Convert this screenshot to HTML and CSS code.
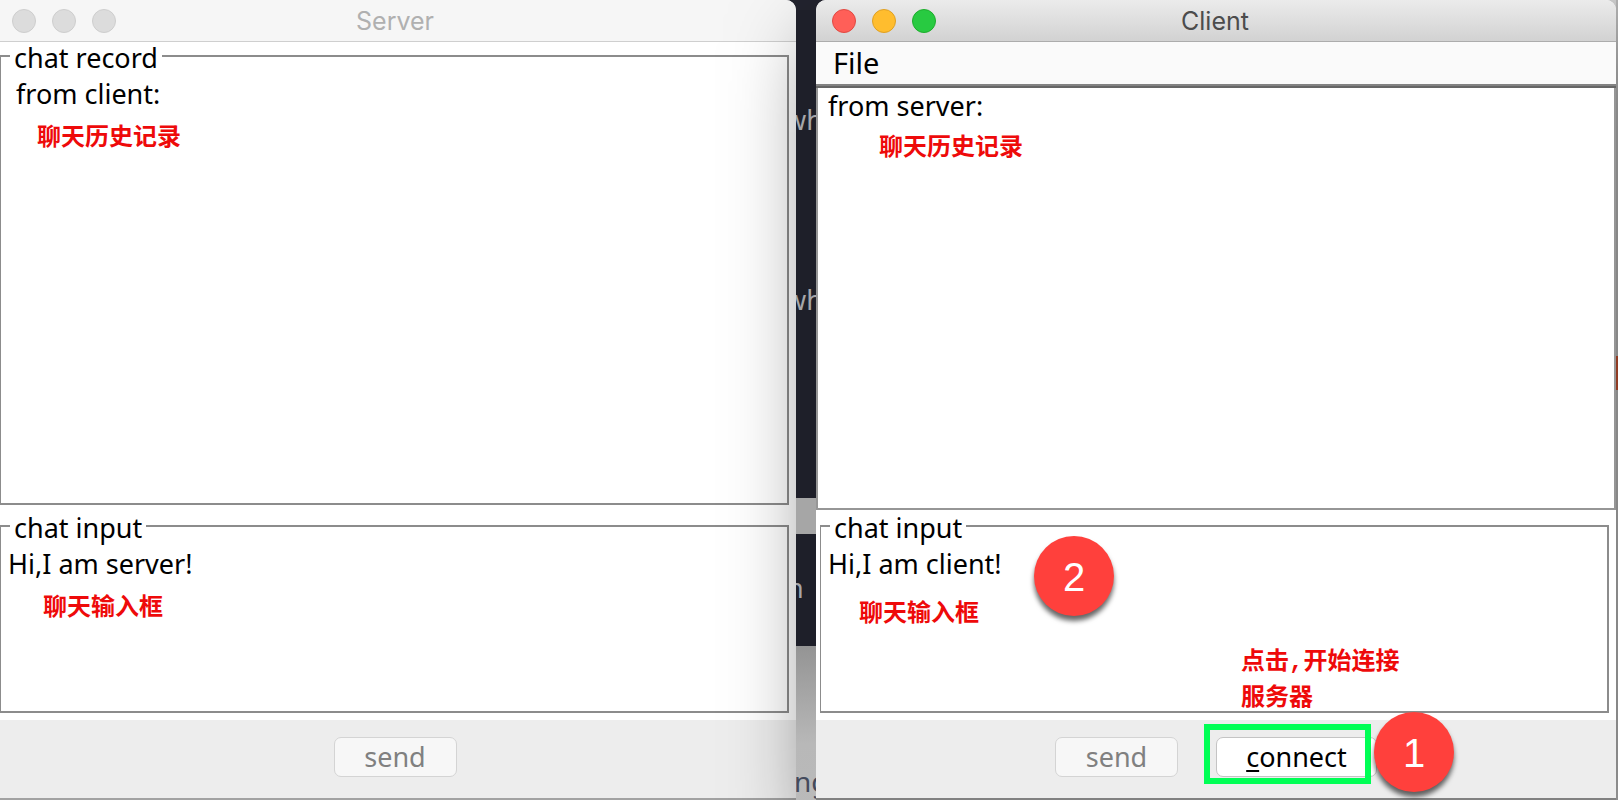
FILE: index.html
```html
<!DOCTYPE html>
<html lang="en">
<head>
<meta charset="utf-8">
<title>Chat</title>
<link rel="stylesheet" href="styles.css">
</head>
<body>
<main class="desktop">
  <section class="window window-server">
    <header class="titlebar">
      <div class="lights"><button class="light" aria-label="Close"></button><button class="light" aria-label="Minimize"></button><button class="light" aria-label="Zoom"></button></div>
      <h1 class="title">Server</h1>
    </header>
    <div class="content">
      <fieldset class="group group-record">
        <legend>chat record</legend>
        <textarea class="area area-indent" aria-label="chat record" readonly>from client:</textarea>
      </fieldset>
      <fieldset class="group group-input">
        <legend>chat input</legend>
        <textarea class="area" aria-label="chat input">Hi,I am server!</textarea>
      </fieldset>
    </div>
    <footer class="actions"><button class="btn" disabled>send</button></footer>
    <p class="note note-server-record">聊天历史记录</p>
    <p class="note note-server-input">聊天输入框</p>
  </section>

  <aside class="behind">
    <div class="pane pane-code"><p>wh</p><p>wh</p></div>
    <div class="pane pane-bar"></div>
    <div class="pane pane-term"><p>n</p></div>
    <div class="pane pane-page"><p>ng</p></div>
  </aside>

  <section class="window window-client">
    <header class="titlebar titlebar-active">
      <div class="lights"><button class="light light-close" aria-label="Close"></button><button class="light light-min" aria-label="Minimize"></button><button class="light light-zoom" aria-label="Zoom"></button></div>
      <h1 class="title">Client</h1>
    </header>
    <nav class="menubar"><button class="menu">File</button></nav>
    <div class="content">
      <div class="scroll">
        <textarea class="area" aria-label="chat record" readonly>from server:</textarea>
      </div>
      <fieldset class="group group-input">
        <legend>chat input</legend>
        <textarea class="area" aria-label="chat input">Hi,I am client!</textarea>
      </fieldset>
    </div>
    <footer class="actions">
      <button class="btn" disabled>send</button>
      <div class="target">
        <button class="btn btn-connect"><u>c</u>onnect</button>
        <span class="frame"></span>
        <span class="badge badge-one">1</span>
        <p class="note note-connect">点击,开始连接<br>服务器</p>
      </div>
    </footer>
    <p class="note note-client-record">聊天历史记录</p>
    <p class="note note-client-input">聊天输入框</p>
    <span class="badge badge-two">2</span>
  </section>
  <div class="edge"><span></span></div>
</main>
</body>
</html>
```

FILE: styles.css
```css
* { box-sizing: border-box; }

body {
  margin: 0;
  font: 27px/36px "Noto Sans", sans-serif;
  color: #000;
}

p, h1 { margin: 0; }
button, textarea { font: inherit; color: inherit; }

.desktop {
  display: grid;
  grid-template-columns: 796fr 20px 800fr 2px;
  min-height: 100vh;
  overflow: hidden;
  background: linear-gradient(90deg, #23242f 60%, #cfcfcf 60%);
}

.window {
  position: relative;
  display: flex;
  flex-direction: column;
  background: #fff;
  border-bottom: 2px solid #a2a2a2;
}
.window-server { border-radius: 0 10px 0 0; }
.window-client {
  z-index: 1;
  border-radius: 10px 10px 0 0;
  border-bottom-color: #818181;
  box-shadow: 0 40px 84px rgba(0, 0, 0, 0.5);
}

.titlebar {
  display: grid;
  grid-template-columns: 1fr auto 1fr;
  align-items: center;
  height: 42px;
  padding: 0 18px 0 16px;
  background: #f6f6f6;
  border-bottom: 1px solid #cfcfcf;
  border-radius: inherit;
}
.window-server .titlebar { padding: 0 18px 0 12px; }
.titlebar-active {
  background: linear-gradient(#ebebeb, #d2d2d2);
  border-bottom-color: #acacac;
  border-radius: 10px 10px 0 0;
}
.title {
  font: 400 25px/40px Inter, sans-serif;
  color: #b0b0b0;
}
.titlebar-active .title { color: #4c4c4c; }

.lights { display: flex; gap: 16px; }
.light {
  width: 24px;
  height: 24px;
  padding: 0;
  border: 1px solid #cecece;
  border-radius: 50%;
  background: #dcdcdc;
}
.light-close { background: #ff5f58; border-color: #e14942; }
.light-min { background: #ffbd2e; border-color: #dfa023; }
.light-zoom { background: #28ca41; border-color: #1dad2c; }

.menubar {
  height: 46px;
  background: #fafafa;
  border-bottom: 2px solid #666;
  box-shadow: inset 0 -2px #828282;
}
.menu {
  height: 42px;
  padding: 0 17px;
  border: 0;
  background: none;
  font-size: 29px;
}

.content {
  flex: 1;
  display: flex;
  flex-direction: column;
  gap: 7px;
  padding: 0 7px 7px 0;
}
.window-client .content { gap: 2px; padding: 0 0 7px; }

.group {
  display: flex;
  min-width: 0;
  margin: 0;
  padding: 6px 0 0;
  border: 2px solid #8c8c8c;
  border-left-width: 1px;
}
.group legend {
  margin-left: 9px;
  padding: 4px 4px 0;
  line-height: 24px;
}
.group-record { flex: 1; }
.group-input { height: 201px; }
.window-client .group-input { margin: 0 7px 0 4px; }

.scroll {
  flex: 1;
  display: flex;
  border: 2px solid #969696;
  border-top: 0;
}

.area {
  flex: 1;
  min-width: 0;
  padding: 0 7px;
  border: 0;
  outline: 0;
  resize: none;
  background: transparent;
}
.area-indent { padding-left: 15px; }
.scroll .area { padding: 0 10px; }

.actions {
  display: flex;
  justify-content: center;
  align-items: center;
  gap: 38px;
  height: 78px;
  padding-bottom: 4px;
  background: #ededed;
}
.window-server .actions { padding-right: 6px; }

.btn {
  width: 123px;
  height: 40px;
  padding: 0;
  border: 1px solid #c4c4c4;
  border-radius: 7px;
  background: #fff;
  line-height: 36px;
}
.btn:disabled { background: #f7f7f7; border-color: #d4d4d4; color: #808080; }
.btn-connect { display: block; width: 161px; }
.btn-connect u { text-decoration-thickness: 2px; text-underline-offset: 3px; }

/* Annotations laid over the windows */
.target { position: relative; }
.frame {
  position: absolute;
  inset: -13px 6px -7px -12px;
  border: 6px solid #00ff55;
  pointer-events: none;
}
.note {
  position: absolute;
  font: 700 24px/36px "Liberation Mono", "Noto Sans CJK SC", monospace;
  color: #ee0a0a;
  white-space: nowrap;
}
.note-server-record { left: 37px; top: 121px; }
.note-server-input { left: 43px; bottom: 171px; }
.note-client-record { left: 63px; top: 131px; }
.note-client-input { left: 43px; bottom: 165px; }
.note-connect { left: 25px; bottom: 60px; }

.badge {
  position: absolute;
  width: 80px;
  height: 80px;
  border-radius: 50%;
  background: #ff403c;
  box-shadow: 0 5px 5px rgba(0, 0, 0, 0.6);
  color: #fff;
  font: 40px/82px "Liberation Sans", Arial, sans-serif;
  text-align: center;
}
.badge-one { left: 158px; top: -25px; }
.badge-two { left: 218px; bottom: 182px; }

/* Slices of the windows lying underneath */
.behind {
  position: relative;
  z-index: 2;
  display: flex;
  flex-direction: column;
  height: 100vh;
  margin-top: 10px;
  margin-bottom: -10px;
}
.pane { overflow: hidden; white-space: nowrap; color: #a6a6aa; background: #1e1f29; }
.pane-code { flex: 1; padding-top: 92px; text-indent: -11px; }
.pane-code p + p { margin-top: 144px; }
.pane-bar { height: 36px; background: #a6a6a6; }
.pane-term { height: 112px; padding-top: 36px; text-indent: -9px; }
.pane-page {
  height: 164px;
  padding-top: 117px;
  text-indent: -2px;
  color: #444a5c;
  font-size: 28px;
  background: linear-gradient(#949494, #b8b8b8 60%, #bababa);
}

.edge { padding-top: 356px; background: #b4b4b4; }
.edge span { display: block; height: 34px; background: #c04f2e; }
```
